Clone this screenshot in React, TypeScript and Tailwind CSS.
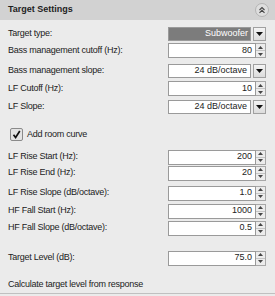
import { ReactNode } from "react";

const font = "font-['Liberation_Sans',Arial,sans-serif]";

function Label({ children }: { children: ReactNode }) {
  return <span className="flex-1 text-[9px] tracking-[-0.25px] text-[#222]">{children}</span>;
}

function Spin({ value }: { value: string }) {
  return (
    <div className="flex h-[15px] w-[98px]">
      <div className="flex flex-1 items-center justify-end border border-[#9a9a9a] bg-white pr-[3px] text-[9px] text-[#222]">
        {value}
      </div>
      <div className="flex w-[10px] flex-col border border-l-0 border-[#a8a8a8] bg-[#ececec]">
        <div className="flex flex-1 items-center justify-center border-b border-[#c4c4c4]">
          <svg width="5" height="3" viewBox="0 0 5 3">
            <path d="M0 3 L2.5 0 L5 3 Z" fill="#444" />
          </svg>
        </div>
        <div className="flex flex-1 items-center justify-center">
          <svg width="5" height="3" viewBox="0 0 5 3">
            <path d="M0 0 L2.5 3 L5 0 Z" fill="#444" />
          </svg>
        </div>
      </div>
    </div>
  );
}

function Drop({ value, active }: { value: string; active?: boolean }) {
  return (
    <div className="flex h-[14px] w-[98px] gap-[2px]">
      <div
        className={
          active
            ? "flex flex-1 items-center justify-end border border-[#9a9a9a] bg-[#7c7c7c] pr-[2px] text-[9px] text-white"
            : "flex flex-1 items-center justify-end border border-[#9a9a9a] bg-white pr-[3px] text-[9px] text-[#222]"
        }
      >
        {value}
      </div>
      <div className="flex w-[13px] items-center justify-center border border-[#a0a0a0] bg-gradient-to-b from-[#f4f4f4] to-[#dcdcdc]">
        <svg width="7" height="4" viewBox="0 0 7 4">
          <path d="M0 0 L3.5 4 L7 0 Z" fill="#111" />
        </svg>
      </div>
    </div>
  );
}

function Row({ label, mt, children }: { label: string; mt: string; children: ReactNode }) {
  return (
    <div className={`flex items-center ${mt}`}>
      <Label>{label}</Label>
      {children}
    </div>
  );
}

export default function App() {
  return (
    <div className={`w-[275px] h-[296px] ${font} bg-[#ebebeb]`}>
      <div className="flex h-[20px] items-center justify-between bg-[#d2d2d2] pl-2 pr-[6px]">
        <span className="text-[9px] font-bold text-[#1e1e1e]">Target Settings</span>
        <div className="flex h-[14px] w-[14px] items-center justify-center rounded-full border border-[#b4b4b4] bg-[#dedede]">
          <svg width="8" height="8" viewBox="0 0 8 8">
            <path d="M1.5 4 L4 1.5 L6.5 4 M1.5 6.8 L4 4.3 L6.5 6.8" stroke="#444" strokeWidth="1.1" fill="none" />
          </svg>
        </div>
      </div>

      <div className="flex h-[274px] flex-col border-b border-[#c0c0c0] pl-2 pr-[9px]">
        <Row label="Target type:" mt="mt-[7px]">
          <Drop value="Subwoofer" active />
        </Row>
        <Row label="Bass management cutoff (Hz):" mt="mt-[2px]">
          <Spin value="80" />
        </Row>
        <Row label="Bass management slope:" mt="mt-[6px]">
          <Drop value="24 dB/octave" />
        </Row>
        <Row label="LF Cutoff (Hz):" mt="mt-[3px]">
          <Spin value="10" />
        </Row>
        <Row label="LF Slope:" mt="mt-[4px]">
          <Drop value="24 dB/octave" />
        </Row>

        <div className="mt-[14px] flex items-center gap-[4px] pl-[2px]">
          <div className="flex h-[13px] w-[13px] items-center justify-center rounded-[2px] border border-[#8a8a8a] bg-[#e4e4e4]">
            <svg width="9" height="9" viewBox="0 0 9 9">
              <path d="M1.5 4.8 L3.6 7.5 L7.8 1" stroke="#111" strokeWidth="1.7" fill="none" />
            </svg>
          </div>
          <span className="text-[9px] tracking-[-0.25px] text-[#222]">Add room curve</span>
        </div>

        <Row label="LF Rise Start (Hz):" mt="mt-[8px]">
          <Spin value="200" />
        </Row>
        <Row label="LF Rise End (Hz):" mt="mt-[1px]">
          <Spin value="20" />
        </Row>
        <Row label="LF Rise Slope (dB/octave):" mt="mt-[5px]">
          <Spin value="1.0" />
        </Row>
        <Row label="HF Fall Start (Hz):" mt="mt-[3px]">
          <Spin value="1000" />
        </Row>
        <Row label="HF Fall Slope (dB/octave):" mt="mt-[2px]">
          <Spin value="0.5" />
        </Row>
        <Row label="Target Level (dB):" mt="mt-[15px]">
          <Spin value="75.0" />
        </Row>
        <span className="mt-[12px] text-[9px] tracking-[-0.25px] text-[#222]">
          Calculate target level from response
        </span>
      </div>
    </div>
  );
}
